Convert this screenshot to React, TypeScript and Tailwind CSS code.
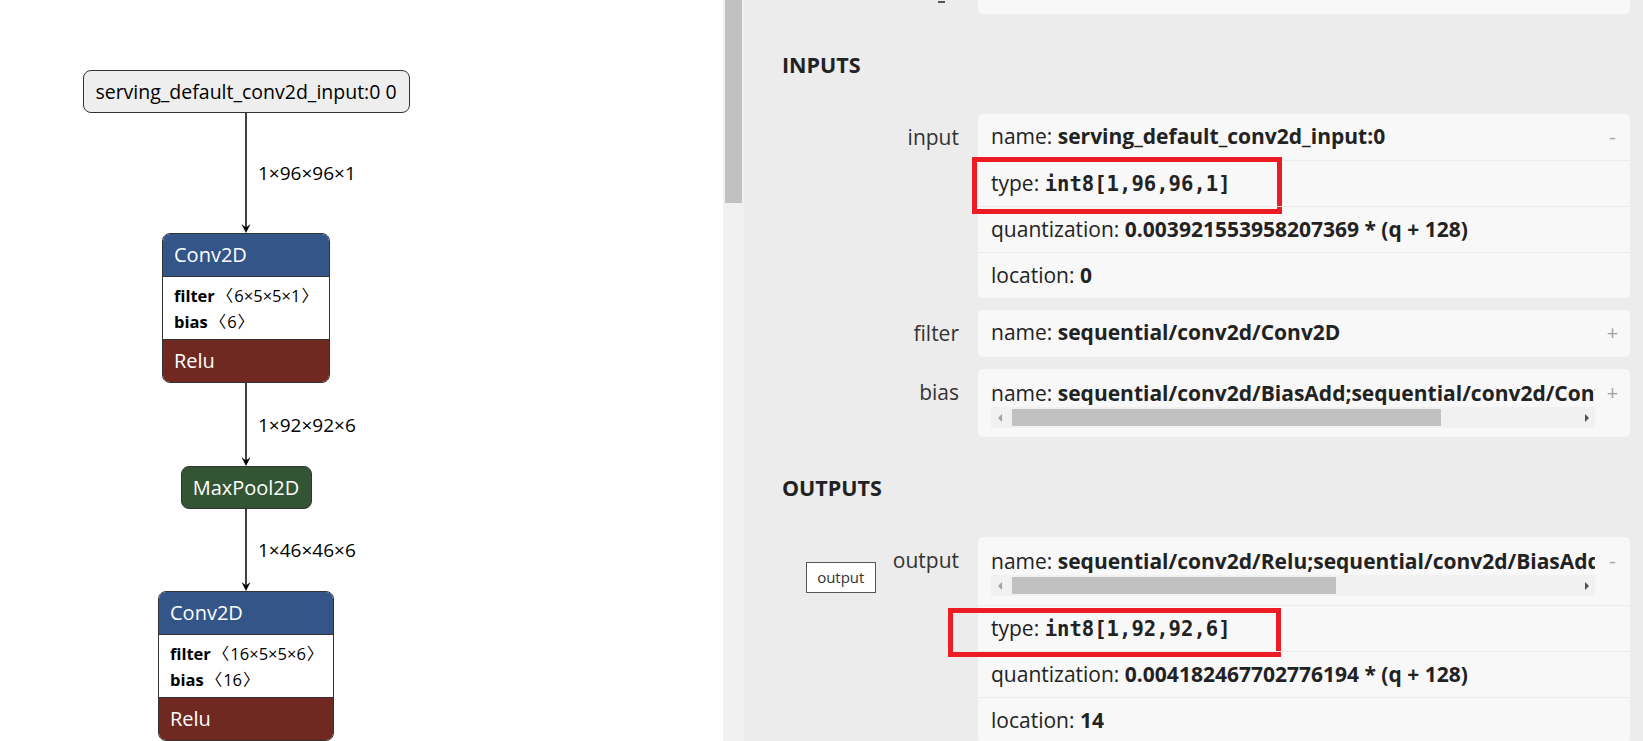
import React from "react";

const SANS = "font-['Open_Sans','Noto_Sans_CJK_SC',sans-serif]";
const MONO = "font-['DejaVu_Sans_Mono',monospace]";

function Edge({ cls, h, label }: { cls: string; h: number; label: string }) {
  return (
    <div className={`relative flex w-full justify-center ${cls}`}>
      <svg width="16" height={h} viewBox={`0 0 16 ${h}`} className="block">
        <line x1="8" y1="0" x2="8" y2={h - 4} stroke="#000" strokeWidth="1.5" />
        <path d={`M8 ${h} L3.5 ${h - 9} L8 ${h - 5.5} L12.5 ${h - 9} Z`} fill="#000" />
      </svg>
      <span className="absolute left-[258px] top-1/2 -translate-y-1/2 text-[19px] leading-none text-black">
        {label}
      </span>
    </div>
  );
}

function Shape({ name, dims }: { name: string; dims: string }) {
  return (
    <div className="flex h-[26px] items-center">
      <b>{name}</b>
      <span className="ml-[2px]">〈</span>
      <span className="ml-[1px]">{dims}</span>
      <span className="ml-[1px]">〉</span>
    </div>
  );
}

function LayerNode({ w, filter, bias }: { w: string; filter: string; bias: string }) {
  return (
    <div className={`${w} overflow-hidden rounded-[8px] border-[1.5px] border-[#333]`}>
      <div className="flex h-[42px] items-center bg-[#335588] px-[11px] text-[20px] text-white">Conv2D</div>
      <div className="h-[63px] border-t-[1.5px] border-[#333] bg-white px-[11px] pt-[6px] text-[16.5px] text-black">
        <Shape name="filter" dims={filter} />
        <Shape name="bias" dims={bias} />
      </div>
      <div className="flex h-[43px] items-center border-t-[1.5px] border-[#333] bg-[#702921] px-[11px] text-[20px] text-white">
        Relu
      </div>
    </div>
  );
}

function ScrollBar({ thumb }: { thumb: string }) {
  return (
    <div className="mt-[2px] flex h-[21px] bg-[#f1f1f1]">
      <div className="flex w-[17px] items-center justify-center">
        <div className="h-0 w-0 border-y-[4px] border-r-[4px] border-y-transparent border-r-[#a3a3a3]" />
      </div>
      <div className={`my-[2px] ml-[4px] bg-[#c1c1c1] ${thumb}`} />
      <div className="flex-1" />
      <div className="flex w-[17px] items-center justify-center">
        <div className="h-0 w-0 border-y-[4px] border-l-[4px] border-y-transparent border-l-[#505050]" />
      </div>
    </div>
  );
}

function Row({ children, sign, top }: { children: React.ReactNode; sign?: string; top?: boolean }) {
  return (
    <div className={top ? "relative flex h-[46px] items-center" : "relative flex h-[46px] items-center border-t border-[#ececec]"}>
      <div className="min-w-0 flex-1 overflow-hidden whitespace-nowrap pl-[13px]">{children}</div>
      <div className="flex w-[35px] justify-center text-[20px] text-[#a0a0a0]">{sign}</div>
    </div>
  );
}

function ScrollRow({ value, thumb, sign }: { value: string; thumb: string; sign: string }) {
  return (
    <div className="flex h-[68px]">
      <div className="min-w-0 flex-1 pl-[13px] pt-[12px]">
        <div className="h-[24px] overflow-hidden whitespace-nowrap leading-[24px]">
          name: <b>{value}</b>
        </div>
        <ScrollBar thumb={thumb} />
      </div>
      <div className="flex h-[48px] w-[35px] items-center justify-center text-[20px] text-[#a0a0a0]">{sign}</div>
    </div>
  );
}

function Prop({ label, extra, children }: { label: string; extra?: React.ReactNode; children: React.ReactNode }) {
  return (
    <div className="flex">
      <div className="flex w-[234px] shrink-0 items-start justify-end pr-[19px]">
        {extra}
        <div className="flex h-[47px] items-center text-[#333]">{label}</div>
      </div>
      <div className="relative min-w-0 flex-1 rounded-[5px] bg-[#f8f8f8]">{children}</div>
    </div>
  );
}

export default function App() {
  return (
    <div className={`flex h-[741px] w-[1643px] overflow-hidden bg-white ${SANS}`}>
      {/* graph */}
      <div className="w-[723px] shrink-0 bg-white">
        <div className="flex w-[492px] flex-col items-center pt-[70px]">
          <div className="flex h-[43px] w-[327px] items-center justify-center rounded-[8px] border-[1.5px] border-[#333] bg-[#eeeeee] text-[19.5px] text-black">
            serving_default_conv2d_input:0 0
          </div>
          <Edge cls="h-[120px]" h={120} label="1×96×96×1" />
          <LayerNode w="w-[168px]" filter="6×5×5×1" bias="6" />
          <Edge cls="h-[83px]" h={83} label="1×92×92×6" />
          <div className="flex h-[43px] w-[131px] items-center justify-center rounded-[8px] border-[1.5px] border-[#333] bg-[#335533] text-[20px] text-white">
            MaxPool2D
          </div>
          <Edge cls="h-[82px]" h={82} label="1×46×46×6" />
          <LayerNode w="w-[176px]" filter="16×5×5×6" bias="16" />
        </div>
      </div>

      {/* graph scrollbar */}
      <div className="w-[21px] shrink-0 bg-[#f1f1f1] pl-[2px]">
        <div className="h-[203px] w-[17px] bg-[#c1c1c1]" />
      </div>

      {/* sidebar */}
      <div className="min-w-0 flex-1 bg-[#ececec] pr-[13px] text-[21px] text-[#222]">
        <div className="flex">
          <div className="flex w-[234px] shrink-0 justify-end pr-[19px]">
            <div className="mr-[14px] mt-[1px] h-[2px] w-[7px] bg-[#555]" />
          </div>
          <div className="h-[14px] flex-1 rounded-b-[5px] bg-[#f8f8f8]" />
        </div>

        <div className="mt-[31px] flex h-[40px] items-center pl-[38px] text-[21.5px] font-bold">INPUTS</div>

        <div className="mt-[29px] flex flex-col gap-[12px]">
          <Prop label="input">
            <Row top sign="-">
              name: <b>serving_default_conv2d_input:0</b>
            </Row>
            <Row>
              type: <b className={`${MONO} text-[20.6px]`}>int8[1,96,96,1]</b>
              <div className="pointer-events-none absolute -left-[6px] -top-[4px] h-[57px] w-[310px] border-[5px] border-[#ed1c24]" />
            </Row>
            <Row>
              quantization: <b>0.003921553958207369 * (q + 128)</b>
            </Row>
            <Row>
              location: <b>0</b>
            </Row>
          </Prop>
          <Prop label="filter">
            <Row top sign="+">
              name: <b>sequential/conv2d/Conv2D</b>
            </Row>
          </Prop>
          <Prop label="bias">
            <ScrollRow value="sequential/conv2d/BiasAdd;sequential/conv2d/Conv2D" thumb="w-[429px]" sign="+" />
          </Prop>
        </div>

        <div className="mt-[31px] flex h-[40px] items-center pl-[38px] text-[21.5px] font-bold">OUTPUTS</div>

        <div className="mt-[29px]">
          <Prop
            label="output"
            extra={
              <div className="mr-[17px] mt-[25px] flex h-[31px] w-[70px] items-center justify-center border border-[#555] bg-white text-[15px] text-[#333]">
                output
              </div>
            }
          >
            <ScrollRow
              value="sequential/conv2d/Relu;sequential/conv2d/BiasAdd;sequential/conv2d/Conv2D"
              thumb="w-[324px]"
              sign="-"
            />
            <Row>
              type: <b className={`${MONO} text-[20.6px]`}>int8[1,92,92,6]</b>
              <div className="pointer-events-none absolute -left-[30px] top-[2px] h-[49px] w-[333px] border-[5px] border-[#ed1c24]" />
            </Row>
            <Row>
              quantization: <b>0.004182467702776194 * (q + 128)</b>
            </Row>
            <Row>
              location: <b>14</b>
            </Row>
          </Prop>
        </div>
      </div>
    </div>
  );
}
